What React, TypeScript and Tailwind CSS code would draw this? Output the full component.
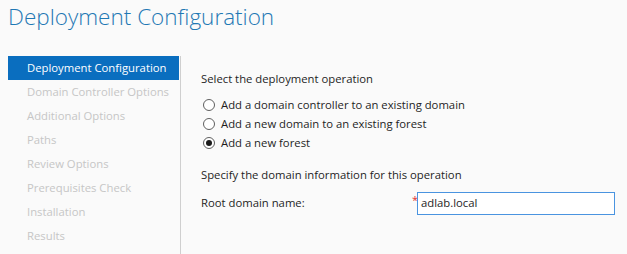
const steps = [
  'Deployment Configuration',
  'Domain Controller Options',
  'Additional Options',
  'Paths',
  'Review Options',
  'Prerequisites Check',
  'Installation',
  'Results',
];

const operations = [
  { label: 'Add a domain controller to an existing domain', checked: false },
  { label: 'Add a new domain to an existing forest', checked: false },
  { label: 'Add a new forest', checked: true },
];

function Radio({ checked }: { checked: boolean }) {
  return (
    <span className="flex h-[12px] w-[12px] shrink-0 items-center justify-center rounded-full border border-[#5f5f5f] bg-white">
      {checked && <span className="h-[6px] w-[6px] rounded-full bg-[#1a1a1a]" />}
    </span>
  );
}

export default function App() {
  return (
    <div className="h-[254px] w-[627px] overflow-hidden bg-[#fafafa] font-['Open_Sans','Noto_Sans',sans-serif] text-[11.3px] text-[#1e1e1e]">
      <h1 className="pl-[8px] pt-[1px] text-[22.5px] font-light leading-[32px] text-[#1f78b4]">
        Deployment Configuration
      </h1>

      <div className="mt-[23px] flex">
        <nav className="w-[180px] shrink-0 pl-[8px]">
          {steps.map((s, i) => (
            <div
              key={s}
              className={
                i === 0
                  ? 'flex h-[24px] w-[171px] items-center whitespace-nowrap bg-[#0a6ebf] pl-[19px] text-white'
                  : 'flex h-[24px] items-center whitespace-nowrap pl-[19px] text-[#c6c6c6]'
              }
            >
              {s}
            </div>
          ))}
        </nav>
        <div className="h-[200px] w-px shrink-0 bg-[#cfcfcf]" />

        <div className="flex-1 pl-[20px] pt-[13px]">
          <div className="leading-[20px]">Select the deployment operation</div>
          <div className="mt-[6px] flex flex-col">
            {operations.map((o) => (
              <label key={o.label} className="flex h-[19px] items-center gap-[6px] pl-[2px] leading-[19px]">
                <Radio checked={o.checked} />
                <span>{o.label}</span>
              </label>
            ))}
          </div>

          <div className="mt-[13px] leading-[20px]">Specify the domain information for this operation</div>
          <div className="mt-[7px] flex items-center">
            <span className="w-[211px]">Root domain name:</span>
            <span className="mb-[8px] w-[5px] text-[11px] leading-none text-[#e23030]">*</span>
            <div className="flex h-[23px] w-[198px] items-center border border-[#4a94e0] bg-white pl-[3px]">
              adlab.local
            </div>
          </div>
        </div>
      </div>
    </div>
  );
}
